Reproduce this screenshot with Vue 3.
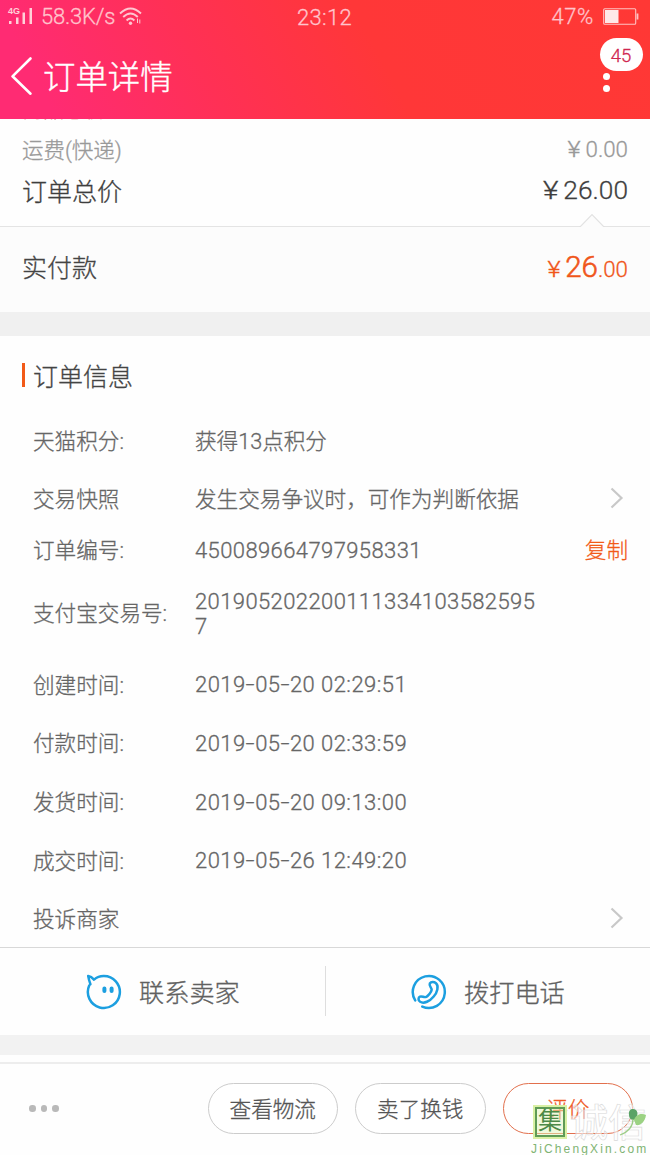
<script setup>
const rows = [
  { label: '天猫积分:', value: '获得13点积分', h: 50 },
  { label: '交易快照', value: '发生交易争议时，可作为判断依据', h: 66, arrow: true },
  { label: '订单编号:', value: '450089664797958331', h: 36, copy: true, num: 'id' },
  { label: '支付宝交易号:', value: '2019052022001113341035825957', h: 90, num: 'id' },
  { label: '创建时间:', value: '2019-05-20 02:29:51', h: 53, num: 'date' },
  { label: '付款时间:', value: '2019-05-20 02:33:59', h: 64, num: 'date' },
  { label: '发货时间:', value: '2019-05-20 09:13:00', h: 54, num: 'date' },
  { label: '成交时间:', value: '2019-05-26 12:49:20', h: 63, num: 'date' },
  { label: '投诉商家', value: '', h: 53, arrow: true },
]
const parts = (r) => (r.num === 'date' ? r.value.split(/(-)/) : [r.value])
</script>

<template>
  <div class="page">
    <header class="header">
      <div class="status">
        <svg class="signal" width="27" height="20" viewBox="0 0 27 20">
          <text x="0" y="6.7" class="g4">4G</text>
          <g fill="#ffd0d8">
            <rect x="1" y="14" width="2.5" height="3" /><rect x="8" y="10.5" width="2.5" height="6.5" />
            <rect x="14.5" y="5.5" width="2.5" height="11.5" /><rect x="21.5" y="1" width="2.5" height="16" />
          </g>
        </svg>
        <span class="speed">58.3K/s</span>
        <svg class="wifi" width="25" height="20" viewBox="0 0 25 20" fill="none" stroke="#ffc6d0" stroke-width="1.9">
          <path d="M1 6.5Q11.5 -3.5 22 6.5M4.2 10Q11.5 3 18.8 10M7.6 13.5Q11.5 9.7 15.4 13.5" />
          <circle cx="11.5" cy="16.3" r="1.7" fill="#ffc6d0" stroke="none" />
          <path d="M18.5 11.5v4.5M20.8 16.5v-4" stroke-width="1" />
        </svg>
        <span class="clock">23:12</span>
        <span class="percent">47%</span>
        <svg class="battery" width="37" height="18" viewBox="0 0 37 18">
          <rect x="1.7" y=".7" width="32" height="15.6" rx="1" fill="none" stroke="#ffc2c2" stroke-width="1.1" />
          <rect x="3" y="2" width="13.5" height="13" fill="#ffe8e8" />
          <rect x="34.6" y="5.5" width="1.8" height="6" fill="#ffc2c2" />
        </svg>
      </div>
      <div class="nav">
        <svg width="24" height="40" viewBox="0 0 24 40" fill="none" stroke="#fff" stroke-width="2.6" stroke-linecap="round" stroke-linejoin="round">
          <path d="M21.5 2.5 3.5 20.3 21.5 37.7" />
        </svg>
        <h1>订单详情</h1>
        <div class="more"><i></i><i></i><b>45</b></div>
      </div>
    </header>

    <section class="totals">
      <div class="peek"><span>商品总价</span></div>
      <div class="line freight"><span>运费(快递)</span><span class="price"><em>¥</em>0.00</span></div>
      <div class="line total"><span>订单总价</span><span class="price"><em>¥</em>26.00</span></div>
    </section>
    <section class="paid">
      <svg class="notch" width="26" height="15" viewBox="0 0 26 15">
        <path d="M1 13.5 13 1.5 25 13.5V15H1Z" fill="#fcfcfc" />
        <path d="M0 13.5H1.5L13 1.5 24.5 13.5H26" fill="none" stroke="#e2e2e2" stroke-width="1.2" />
      </svg>
      <span>实付款</span>
      <span class="price"><em>¥</em><strong>26</strong>.00</span>
    </section>
    <div class="gap"></div>

    <section class="info">
      <h2><span>订单信息</span></h2>
      <div v-for="r in rows" :key="r.label" class="row" :style="{ height: r.h + 'px' }">
        <span class="label">{{ r.label }}</span>
        <span class="value" :class="r.num"><span v-for="(p, i) in parts(r)" :key="i" :class="{ dash: p === '-' }">{{ p }}</span></span>
        <svg v-if="r.arrow" class="chev" width="14" height="22" viewBox="0 0 14 22" fill="none" stroke="#c8c8c8" stroke-width="2.2">
          <path d="M1.5 1.5 11.5 11 1.5 20.5" />
        </svg>
        <a v-if="r.copy" class="copy">复制</a>
      </div>
    </section>

    <section class="contact">
      <div class="cell">
        <svg width="36" height="36" viewBox="0 0 36 36" fill="none" stroke="#1c9fe0" stroke-width="2.5" stroke-linejoin="round" stroke-linecap="round">
          <path d="M4.4 10.2C3.4 7.2 2.6 4.4 2.2 2.1Q5.4 2.6 8 5.6C11 3 14.3 2 17.6 2A16 16 0 1 1 3.2 11.6" />
          <path d="M18.4 14.4v2.6M25.6 14.4v2.6" stroke-width="4" />
        </svg>
        <span>联系卖家</span>
      </div>
      <div class="cell">
        <svg width="36" height="36" viewBox="0 0 36 36" fill="none" stroke="#1c9fe0" stroke-width="2.5" stroke-linejoin="round" stroke-linecap="round">
          <path d="M4.2 26.4A16 16 0 1 1 11.3 32.6" />
          <path d="M18.8 9.5C20 7.7 23 7.6 25 9.2C28.2 12 26.2 18.5 22.7 22.5C19 27 13 30.2 9.2 27.8C6.8 26.2 7.2 23.5 9 22.7C11 21.8 13.5 24 15.4 22.8C17.5 21.8 20.2 18.2 20.6 16C21 13.7 17.6 12 18.8 9.5Z" />
        </svg>
        <span>拨打电话</span>
      </div>
    </section>
    <div class="gap small"></div>

    <footer class="actions">
      <div class="dots"><i></i><i></i><i></i></div>
      <button>查看物流</button>
      <button>卖了换钱</button>
      <button class="primary">评价</button>
    </footer>

    <div class="mark">
      <div class="mark-top">
        <span class="seal">集</span><span class="ghost">诚信</span>
        <svg class="leaf" width="19" height="30" viewBox="0 0 19 30">
          <path d="M1 7C0 1 5 0 8 2C11 5 9 10 6 12C3 12 1 10 1 7Z" fill="#5aa366" />
          <path d="M6 12C8 6 14 5 18 7C17 14 12 18 8 17Z" fill="#9bd283" />
          <path d="M5 11Q5 22-8 27" fill="none" stroke="#9ccd86" stroke-width="1.3" />
        </svg>
      </div>
      <div class="domain">JiChengXin.com</div>
    </div>
  </div>
</template>

<style>
body { background: #fff; overflow: hidden; }
</style>

<style scoped>
* { box-sizing: border-box; }
.page { position: relative; width: 650px; height: 1155px; overflow: hidden; background: #fefefe; color: #444; font-family: Roboto, "Noto Sans CJK SC", sans-serif; font-weight: 300; line-height: 1; -webkit-text-stroke: .3px currentColor; }
i, em { font-style: normal; }
.header { height: 119px; background: linear-gradient(62deg, #ff2b73 8%, #ff3055 32%, #ff3738 58%, #ff3835 100%); color: #fff; }
.status { display: flex; align-items: center; height: 34px; padding: 0 11px 0 8px; position: relative; color: #ffc4cc; font-size: 22px; }
.g4 { font: 700 9px "Liberation Sans", sans-serif; fill: #ffd0d8; stroke: none; -webkit-text-stroke: 0; }
.signal { margin-right: 6px; overflow: visible; }
.speed { width: 75px; white-space: nowrap; letter-spacing: -.2px; }
.wifi { margin-left: 3px; }
.clock { position: absolute; left: 297px; top: 7px; font-size: 22px; letter-spacing: .3px; }
.percent { margin-left: auto; margin-right: 8px; letter-spacing: .6px; }
.nav { display: flex; align-items: center; height: 84px; padding-left: 9px; position: relative; }
.nav h1 { margin: 0 0 0 10px; font-size: 32.4px; font-weight: 300; line-height: 40px; padding-top: 4px; -webkit-text-stroke-width: .4px; }
.more { position: absolute; left: 600px; top: 5px; width: 43px; height: 60px; display: flex; flex-direction: column; align-items: flex-start; gap: 5px; padding: 34px 0 0 3px; }
.more i { width: 7px; height: 7px; border-radius: 50%; background: #fff; }
.more b { position: absolute; left: -.5px; top: -1px; width: 43px; height: 33px; border-radius: 17px; background: #fff; color: #d0264f; font-size: 18.5px; font-weight: 300; line-height: 36px; text-align: center; }
.totals { height: 107px; }
.peek { height: 2px; overflow: hidden; padding-left: 22px; display: flex; align-items: flex-end; color: #cf5b62; font-size: 21px; }
.line { display: flex; justify-content: space-between; align-items: center; padding: 0 22px; }
.freight { height: 56px; color: #999; font-size: 21.5px; padding-top: 4px; }
.freight .price { font-size: 22.3px; margin-top: -4px; }
.total { height: 28px; font-size: 25px; color: #3e3e3e; padding-top: 2px; }
.price { display: inline-flex; align-items: baseline; white-space: nowrap; }
.price em { margin-right: 5px; transform: scaleX(1.14); transform-origin: right; }
.total .price { font-size: 26.3px; margin-top: -4px; }
.paid { position: relative; display: flex; justify-content: space-between; align-items: center; height: 86px; padding: 0 22px 3px; border-top: 1px solid #e4e4e4; background: #fcfcfc; font-size: 25px; }
.paid .price { color: #f0561a; font-size: 22.3px; margin-top: -1px; }
.paid strong { font-size: 29.5px; font-weight: 300; -webkit-text-stroke-width: .6px; }
.notch { position: absolute; left: 579px; top: -14px; }
.gap { height: 24px; background: #f0f0f0; }
.info { height: 611px; }
.info h2 { height: 80px; margin: 0; padding: 0 0 0 22px; display: flex; align-items: center; font-size: 25px; font-weight: 300; }
.info h2 span { margin-top: 2px; }
.info h2::before { content: ""; width: 3px; height: 24px; margin: -2px 8px 0 0; background: #f25a18; }
.row { display: flex; align-items: center; padding: 1px 22px 0 33px; color: #666; font-size: 21.6px; }
.label { width: 162px; white-space: nowrap; margin-top: 1px; }
.value { width: 350px; white-space: nowrap; margin-top: 1px; }
.id { font-size: 22px; letter-spacing: .4px; line-height: 25px; white-space: normal; word-break: break-all; margin-top: 0; width: 345px; }
.date { font-size: 22px; letter-spacing: .45px; margin-top: 0; }
.dash { display: inline-block; letter-spacing: 0; margin: 0 1.8px 0 1.4px; transform: scaleX(1.45); }
.chev { margin: 0 4px 3px auto; }
.copy { margin-left: auto; color: #f25a18; }
.contact { height: 88px; border-top: 1px solid #d8d8d8; display: flex; }
.cell { position: relative; width: 325px; display: flex; align-items: center; padding-left: 86px; gap: 17px; font-size: 25.2px; color: #606060; }
.cell span { margin-top: 4px; }
.cell + .cell::before { content: ""; position: absolute; left: 0; top: 18px; width: 1px; height: 50px; background: #dedede; }
.gap.small { height: 20px; background: #f2f2f2; }
.actions { margin-top: 7px; height: 93px; border-top: 2px solid #ededed; display: flex; align-items: center; padding: 0 17px 2px 29px; gap: 17px; }
.dots { display: flex; gap: 5px; margin-right: auto; }
.dots i { width: 6.5px; height: 6.5px; border-radius: 50%; background: #b9b9b9; }
button { width: 130.5px; height: 51px; border: 1px solid #ccc; border-radius: 26px; background: #fff; color: #555; font: inherit; font-size: 21.6px; padding: 3px 0 0; -webkit-text-stroke: .3px currentColor; }
button.primary { border-color: #e2704d; color: #ef5a26; }
.mark { position: absolute; left: 530px; top: 1105px; width: 120px; height: 50px; }
.mark-top { display: flex; height: 35px; }
.seal { width: 30px; height: 30px; margin: 2px 0 0 5px; border: 2px solid #5f9b56; outline: 2px solid #d9f0a4; outline-offset: 0; background: rgba(225,243,185,.5); color: #4c8a46; font-size: 24px; font-weight: 400; line-height: 24px; text-align: center; -webkit-text-stroke: 0; }
.ghost { margin-left: 5px; font-size: 38px; font-weight: 500; line-height: 36px; color: rgba(255,255,255,.55); -webkit-text-stroke: .6px #d8d8d8; white-space: nowrap; }
.leaf { position: absolute; left: 98px; top: 3px; overflow: visible; }
.domain { color: #7fb473; font: 400 12px "Liberation Sans", sans-serif; letter-spacing: 2.15px; line-height: 14px; padding-left: 1px; margin-top: 2px; white-space: nowrap; -webkit-text-stroke: 0; }
</style>
